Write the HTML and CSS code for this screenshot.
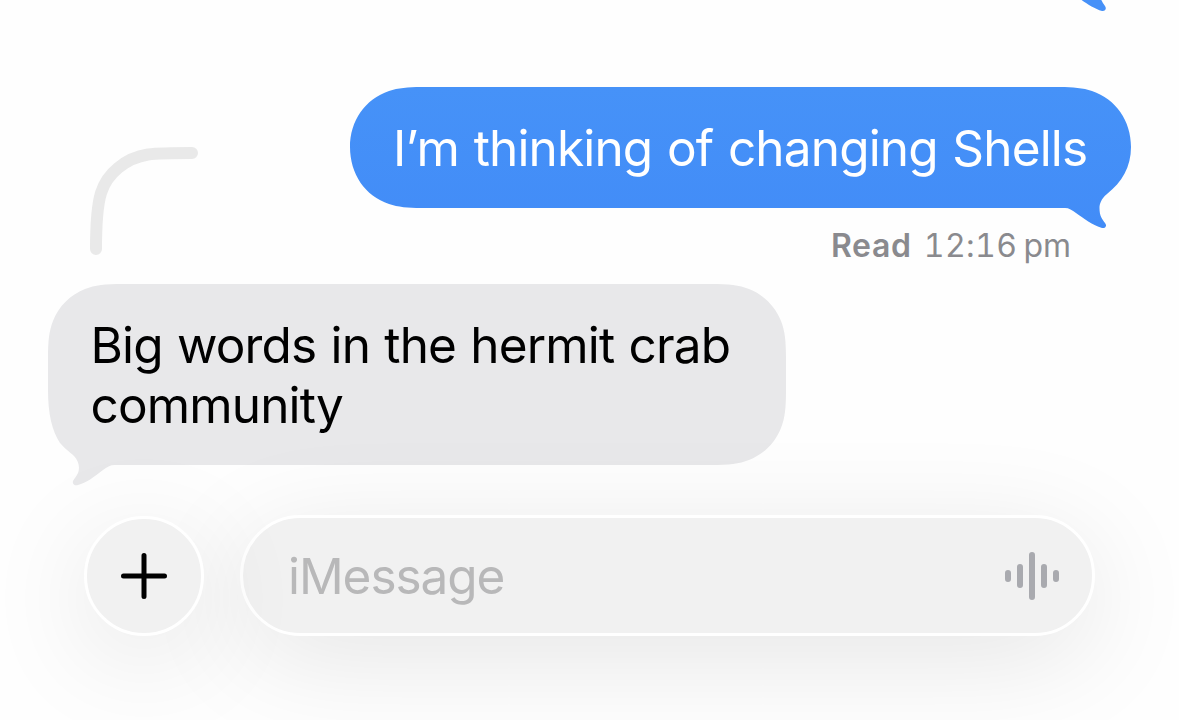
FILE: index.html
```html
<!DOCTYPE html>
<html lang="en">
<head>
  <meta charset="UTF-8" />
  <meta name="viewport" content="width=device-width, initial-scale=1.0" />
  <title>Messages</title>
  <link rel="stylesheet" href="styles.css">
</head>
<body>
  <main class="thread">
    <div class="previous">
      <svg width="60" height="12" viewBox="715 130 60 12">
        <path fill="#4691f8" d="M715,121 C719,121 722,123 726,126 C733,131 743,138.5 752,141 C755,141.5 757,139 755,136 C752,132 750,129 750,122 Z" />
      </svg>
    </div>

    <div class="message sent">
      <svg class="shape" width="781" height="142" viewBox="0 0 781 142">
        <defs>
          <linearGradient id="blue" x1="0" y1="0" x2="0" y2="1">
            <stop offset="0" stop-color="#4692f8" />
            <stop offset="1" stop-color="#428cf7" />
          </linearGradient>
        </defs>
        <path fill="url(#blue)" d="M71,0 H710 C723,0 733,1 742,4 C766,12 781,34 781,60 C781,80 772,95 757,107 C751,112 749.5,117 749.5,121 C749.5,129 752,132 755,136 C757.5,139 755,141.5 752,141 C743,138.5 733,131 726,126 C722,123 719,121 715,121 H71 C58,121 48,120 39,117 C15,109 0,87 0,60 C0,34 15,12 39,4 C48,1 58,0 71,0 Z" />
      </svg>
      <p class="text">I’m thinking of changing Shells</p>
    </div>

    <div class="status">
      <svg class="reply-line" width="110" height="110" viewBox="89 146 110 110">
        <path d="M96,249 C96,224 97,206 101,193 C107,173 126,158 148,154.5 C160,153 175,153 192,153" />
      </svg>
      <p class="receipt"><b>Read</b> <span class="time">12:16</span> <span class="pm">pm</span></p>
    </div>

    <div class="message received">
      <svg class="shape" width="738" height="202" viewBox="0 0 738 202">
        <path fill="#e8e8ea" d="M75,0 H663 C681,0 691,1 701,5 C716,11 727,22 733,37 C737,47 738,57 738,75 V106 C738,124 737,134 733,144 C727,159 716,170 701,176 C691,180 681,181 663,181 H67 C62,181 59,183 55,186 C46,193 38,199 30,201 C27,202 24,200 25,197 C26,195 28,193 30,189 C32,184 31,177 26,172 C22,168 17,165 12,159 C4,147 0,130 0,106 V75 C0,57 1,47 5,37 C11,22 22,11 37,5 C47,1 57,0 75,0 Z" />
      </svg>
      <p class="text">Big words in the hermit crab<br>community</p>
    </div>
  </main>

  <form class="composer">
    <button class="add" type="button" aria-label="Add">
      <svg width="48" height="48" viewBox="0 0 48 48">
        <path d="M24,3.5 V44.5 M3.5,24 H44.5" />
      </svg>
    </button>
    <div class="field">
      <input type="text" placeholder="iMessage" />
      <svg class="wave" width="54" height="48" viewBox="0 0 54 48">
        <path d="M3,21 V27 M15,15 V33 M27,3 V45 M39,15 V33 M51,21 V27" />
      </svg>
    </div>
  </form>
</body>
</html>
```

FILE: styles.css
```css
* {
  box-sizing: border-box;
}

body {
  margin: 0;
  width: 1179px;
  height: 720px;
  overflow: hidden;
  background-color: #fefefe;
  font-family: Inter, "Liberation Sans", sans-serif;
}

p {
  margin: 0;
}

svg {
  display: block;
  flex-shrink: 0;
}

.thread {
  display: flex;
  flex-direction: column;
  height: 515px;
  padding: 0 48px;
}

.previous {
  height: 87px;
  padding-right: 6px;
  align-self: flex-end;
}

/* bubble outline and its text share one grid cell */
.message {
  display: grid;
}

.shape,
.text {
  grid-area: 1 / 1;
}

.text {
  font-size: 49.5px;
  line-height: 60px;
  letter-spacing: -0.85px;
  word-spacing: 1.2px;
  white-space: nowrap;
}

.sent {
  align-self: flex-end;
  height: 59px;
}

.sent .text {
  padding: 31px 0 0 43px;
  color: #fff;
  word-spacing: 1.6px;
}

.received .text {
  padding: 31px 0 0 42.5px;
  color: #000;
}

.status {
  display: flex;
  justify-content: space-between;
  height: 138px;
  padding: 0 60px 0 41px;
}

.receipt {
  display: flex;
  padding-top: 80px;
  font-size: 32px;
  line-height: 40px;
  color: #8a8a8e;
}

.receipt b {
  font-weight: 600;
  letter-spacing: 0.7px;
}

.time {
  margin-left: 12px;
  font-variant-numeric: tabular-nums;
  letter-spacing: 0.4px;
}

.pm {
  margin-left: 6px;
}

.reply-line path {
  fill: none;
  stroke: #e9e9e9;
  stroke-width: 12;
  stroke-linecap: round;
}

.composer {
  display: flex;
  align-items: center;
  gap: 36px;
  height: 121px;
  padding: 0 84px;
}

.add,
.field {
  border: 3px solid #fff;
  background-color: #f1f1f1;
  box-shadow: 0 22px 108px rgba(0, 0, 0, 0.1);
}

.add {
  display: grid;
  place-items: center;
  width: 120px;
  height: 120px;
  padding: 0;
  border-radius: 50%;
}

/* keeps the field's shadow off the button */
.add {
  z-index: 1;
}

.add path {
  stroke: #000;
  stroke-width: 5;
  stroke-linecap: round;
}

.field {
  display: flex;
  align-items: center;
  width: 855px;
  height: 121px;
  padding: 0 33px 0 45px;
  border-radius: 61px;
}

.field input {
  flex: 1;
  min-width: 0;
  height: 60px;
  padding: 0;
  border: none;
  outline: none;
  background: none;
  font-family: inherit;
  font-size: 49.5px;
  letter-spacing: -1.05px;
}

.field input::placeholder {
  color: #b8b8b9;
}

.wave path {
  stroke: #a9aaaf;
  stroke-width: 6;
  stroke-linecap: round;
}
```
